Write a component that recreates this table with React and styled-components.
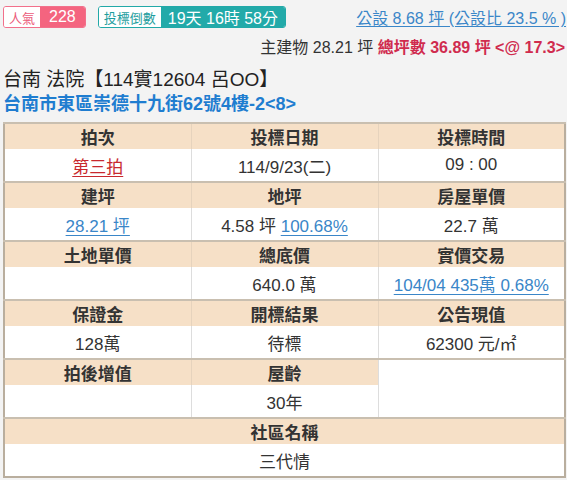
import React from 'react';
import styled, { createGlobalStyle } from 'styled-components';

const GlobalStyle = createGlobalStyle`
  body {
    margin: 0;
    background: #f3f3f3;
    font-family: "Liberation Sans", "Noto Sans CJK TC", sans-serif;
    color: #333;
    overflow: hidden;
  }
`;

const Page = styled.div`
  width: 567px;
  height: 480px;
  padding: 6px 1px 0 3px;
  box-sizing: border-box;
  overflow: hidden;
`;

const TopRow = styled.div`
  display: flex;
  align-items: center;
  gap: 12px;
  height: 22px;
  white-space: nowrap;
`;

const Badge = styled.div`
  display: flex;
  height: 22px;
  border: 1px solid ${(p) => p.$color};
  border-radius: 3px;
  box-sizing: border-box;
  overflow: hidden;
`;

const BadgeLabel = styled.span`
  display: flex;
  align-items: center;
  padding: 0 5px;
  background: #fff;
  color: ${(p) => p.$color};
  font-size: 13px;
`;

const BadgeValue = styled.span`
  display: flex;
  align-items: center;
  padding: 0 ${(p) => p.$pad || 8}px;
  background: ${(p) => p.$color};
  color: #fff;
  font-size: 16px;
`;

const PublicLink = styled.a`
  margin-left: auto;
  color: #3a86c8;
  font-size: 16px;
  text-decoration: underline;
  text-underline-offset: 2px;
`;

const AreaLine = styled.div`
  text-align: right;
  font-size: 16px;
  color: #333;
  margin-top: 10px;
  padding-right: 1px;
  white-space: nowrap;
  line-height: 20px;
`;

const Total = styled.span`
  color: #d02b4e;
  font-weight: bold;
`;

const Title = styled.div`
  font-size: 19px;
  color: #222;
  margin-top: 10px;
  line-height: 24px;
  white-space: nowrap;
`;

const Address = styled.div`
  font-size: 18px;
  font-weight: bold;
  color: #1f7dd0;
  line-height: 24px;
  white-space: nowrap;
`;

const Table = styled.table`
  width: 563px;
  margin-top: 6px;
  border-collapse: collapse;
  table-layout: fixed;
  border: 2px solid #b9ae9e;
  background: #fff;
`;

const HeadCell = styled.th`
  height: 25px;
  padding: 0;
  background: #f6e0c7;
  font-size: 17px;
  font-weight: bold;
  color: #333;
  text-align: center;
  border-top: 2px solid #c9bfb0;
  border-left: 1px solid #e6d3bd;
  &:first-child { border-left: none; }
`;

const DataCell = styled.td`
  height: 32px;
  padding: 0;
  font-size: 17px;
  color: #333;
  text-align: center;
  border-left: 1px solid #ddd;
  background: #fff;
  &:first-child { border-left: none; }
`;

const EmptyCell = styled.td`
  border-top: 2px solid #c9bfb0;
  border-left: 1px solid #ddd;
  background: #fff;
`;

const CellLink = styled.a`
  color: ${(p) => p.$color || '#3a86c8'};
  text-decoration: underline;
  text-underline-offset: 3px;
`;

const groups = [
  {
    heads: ['拍次', '投標日期', '投標時間'],
    cells: [<CellLink $color="#c8282e">第三拍</CellLink>, '114/9/23(二)', '09 : 00'],
  },
  {
    heads: ['建坪', '地坪', '房屋單價'],
    cells: [
      <CellLink>28.21 坪</CellLink>,
      <>4.58 坪 <CellLink>100.68%</CellLink></>,
      '22.7 萬',
    ],
  },
  {
    heads: ['土地單價', '總底價', '實價交易'],
    cells: ['', '640.0 萬', <CellLink>104/04 435萬 0.68%</CellLink>],
  },
  {
    heads: ['保證金', '開標結果', '公告現值'],
    cells: ['128萬', '待標', '62300 元/㎡'],
  },
];

export default function App() {
  return (
    <Page>
      <GlobalStyle />
      <TopRow>
        <Badge $color="#f2708b">
          <BadgeLabel $color="#ec5a7a">人氣</BadgeLabel>
          <BadgeValue $color="#f4647f" $pad={9}>228</BadgeValue>
        </Badge>
        <Badge $color="#22a9a8">
          <BadgeLabel $color="#1e9e9e">投標倒數</BadgeLabel>
          <BadgeValue $color="#22aaa9" $pad={7}>19天 16時 58分</BadgeValue>
        </Badge>
        <PublicLink>公設 8.68 坪 (公設比 23.5 % )</PublicLink>
      </TopRow>
      <AreaLine>
        主建物 28.21 坪 <Total>總坪數 36.89 坪 &lt;@ 17.3&gt;</Total>
      </AreaLine>
      <Title>台南 法院【114實12604 呂OO】</Title>
      <Address>台南市東區崇德十九街62號4樓-2&lt;8&gt;</Address>
      <Table>
        <tbody>
          {groups.map((g, i) => (
            <React.Fragment key={i}>
              <tr>
                {g.heads.map((h) => (
                  <HeadCell key={h}>{h}</HeadCell>
                ))}
              </tr>
              <tr>
                {g.cells.map((c, j) => (
                  <DataCell key={j}>{c}</DataCell>
                ))}
              </tr>
            </React.Fragment>
          ))}
          <tr>
            <HeadCell>拍後增值</HeadCell>
            <HeadCell>屋齡</HeadCell>
            <EmptyCell rowSpan={2} />
          </tr>
          <tr>
            <DataCell></DataCell>
            <DataCell>30年</DataCell>
          </tr>
          <tr>
            <HeadCell colSpan={3}>社區名稱</HeadCell>
          </tr>
          <tr>
            <DataCell colSpan={3}>三代情</DataCell>
          </tr>
        </tbody>
      </Table>
    </Page>
  );
}
